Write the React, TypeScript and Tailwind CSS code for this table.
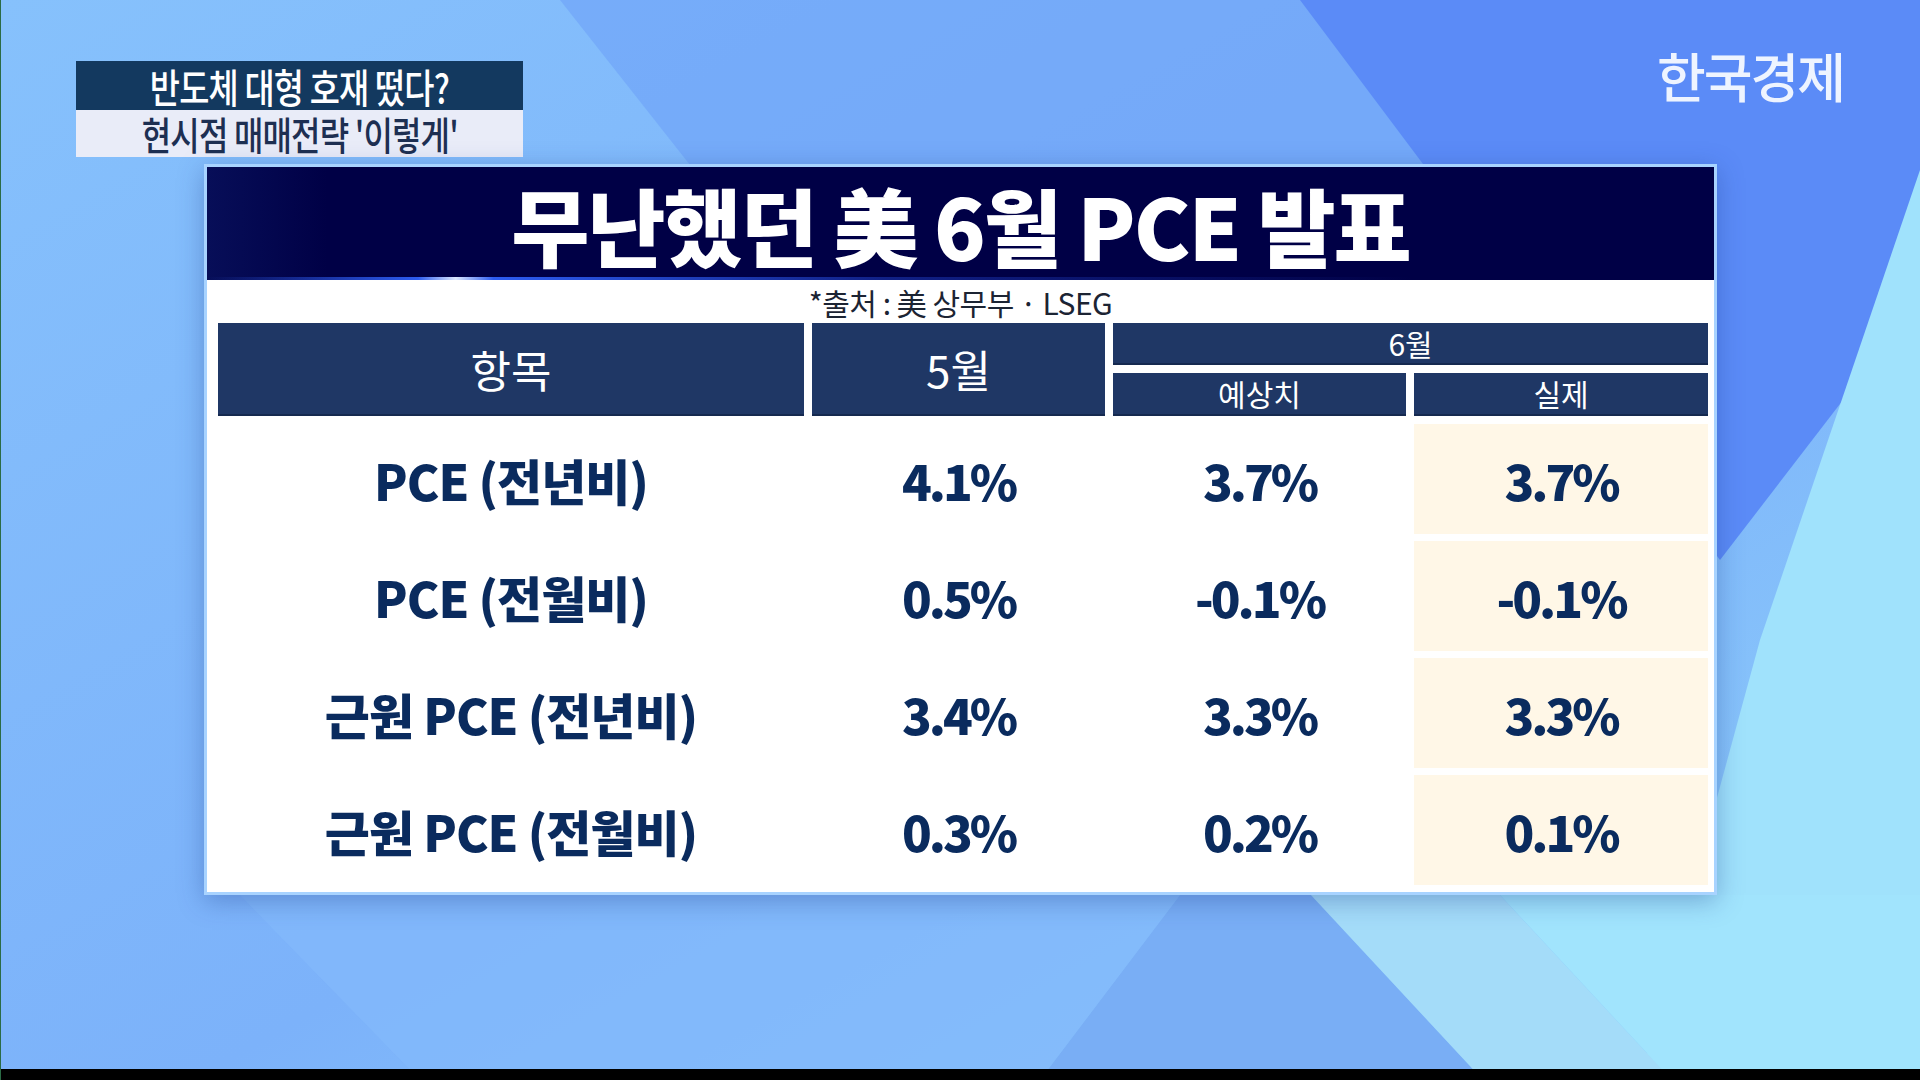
import React from "react";

const rows = [
  { label: "PCE (전년비)", may: "4.1%", est: "3.7%", act: "3.7%" },
  { label: "PCE (전월비)", may: "0.5%", est: "-0.1%", act: "-0.1%" },
  { label: "근원 PCE (전년비)", may: "3.4%", est: "3.3%", act: "3.3%" },
  { label: "근원 PCE (전월비)", may: "0.3%", est: "0.2%", act: "0.1%" },
];

const font = "font-['Noto_Sans_CJK_KR','Noto_Sans',sans-serif]";

function Backdrop() {
  return (
    <svg className="absolute inset-0" width="1920" height="1080" viewBox="0 0 1920 1080">
      <defs>
        <linearGradient id="base" x1="0" y1="0" x2="1" y2="1">
          <stop offset="0" stopColor="#86c1fc" />
          <stop offset="0.55" stopColor="#7cb2fa" />
          <stop offset="1" stopColor="#8fd0fb" />
        </linearGradient>
      </defs>
      <rect width="1920" height="1080" fill="url(#base)" />
      <polygon points="560,0 1340,0 1560,330 820,330" fill="#6c9ff7" opacity="0.55" />
      <polygon points="1300,0 1920,0 1920,300 1720,560" fill="#5b8bf7" />
      <polygon points="1920,170 1920,1080 1640,1080 1760,640" fill="#a0e2fc" />
      <polygon points="1180,895 1311,895 1483,1080 1040,1080" fill="#79aef5" />
      <polygon points="1311,895 1500,895 1672,1080 1483,1080" fill="#a4dcf9" />
      <polygon points="1500,895 1920,895 1920,1080 1672,1080" fill="#a1e4fd" />
      <polygon points="240,895 1180,895 1040,1080 420,1080" fill="#83b9fb" opacity="0.7" />
    </svg>
  );
}

function HeadCell({ children, className = "" }: { children: React.ReactNode; className?: string }) {
  return (
    <div className={`flex items-center justify-center bg-[#1f3765] text-white border-b-2 border-[#15294f] ${className}`}>
      {children}
    </div>
  );
}

export default function App() {
  return (
    <div className={`relative w-[1920px] h-[1080px] overflow-hidden ${font}`}>
      <Backdrop />
      <div className="relative flex flex-col h-full border-l border-[#2b6b45]">
        <div className="flex justify-between pt-[61px] pl-[75px] pr-[76px]">
          <div className="flex flex-col w-[447px]">
            <div className="h-[49px] bg-[#13395f] flex items-center justify-center">
              <span className="inline-block whitespace-nowrap text-[40px] font-medium text-white leading-[1.1] scale-x-[0.82] tracking-[-1px]">
                반도체 대형 호재 떴다?
              </span>
            </div>
            <div className="h-[47px] bg-[#e9ecf8] flex items-center justify-center">
              <span className="inline-block whitespace-nowrap text-[39px] font-medium text-[#1d2f52] leading-[1.1] scale-x-[0.82] tracking-[-1px]">
                현시점 매매전략 '이렇게'
              </span>
            </div>
          </div>
          <div className="-mt-[12px] text-[53px] font-medium text-[#eef4ff] leading-none tracking-[-2px]">
            한국경제
          </div>
        </div>

        <div className="ml-[203px] mt-[7px] w-[1513px] h-[731px] border-[3px] border-[#a8d3ff] bg-white shadow-[0_6px_24px_rgba(30,60,140,0.35)] flex flex-col">
          <div className="relative h-[113px] bg-[#000046] flex items-center justify-center">
            <div className="absolute inset-y-0 left-0 w-[120px] bg-gradient-to-r from-[#0a1460]/70 to-transparent" />
            <div className="absolute bottom-0 inset-x-0 h-[3px] bg-[linear-gradient(90deg,rgba(40,80,230,0)_0%,#2d5cf0_14%,#dce8ff_16.5%,#2d5cf0_19%,rgba(40,80,230,0.4)_45%,rgba(40,80,230,0)_80%)]" />
            <span className="relative text-[85px] font-black text-white leading-[1.1] tracking-[-2px]">
              무난했던 美 6월 PCE 발표
            </span>
          </div>

          <div className="h-[43px] flex items-center justify-center text-[30px] text-[#1c2433] leading-none tracking-[-0.5px]">
            *출처 : 美 상무부 · LSEG
          </div>

          <div className="pl-[11px] pr-[7px] pb-[8px] grid grid-cols-[586px_293px_293px_294px] grid-rows-[42px_43px] gap-x-[8px] gap-y-[8px]">
            <HeadCell className="row-span-2 text-[44px]">항목</HeadCell>
            <HeadCell className="row-span-2 text-[44px]">5월</HeadCell>
            <HeadCell className="col-span-2 text-[30px]">6월</HeadCell>
            <HeadCell className="text-[30px]">예상치</HeadCell>
            <HeadCell className="text-[30px]">실제</HeadCell>
          </div>

          <div className="pl-[11px] pr-[7px] grid grid-cols-[586px_293px_293px_294px] auto-rows-[110px] gap-x-[8px] gap-y-[7px] text-[#0a2b5e] font-black text-[49px] leading-none">
            {rows.map((r) => (
              <React.Fragment key={r.label}>
                <div className="flex items-center justify-center tracking-[-1px]">{r.label}</div>
                <div className="flex items-center justify-center tracking-[-3px]">{r.may}</div>
                <div className="flex items-center justify-center tracking-[-3px]">{r.est}</div>
                <div className="flex items-center justify-center tracking-[-3px] bg-[#fff7e7]">{r.act}</div>
              </React.Fragment>
            ))}
          </div>
        </div>

        <div className="flex-1" />
        <div className="h-[11px] bg-black" />
      </div>
    </div>
  );
}
